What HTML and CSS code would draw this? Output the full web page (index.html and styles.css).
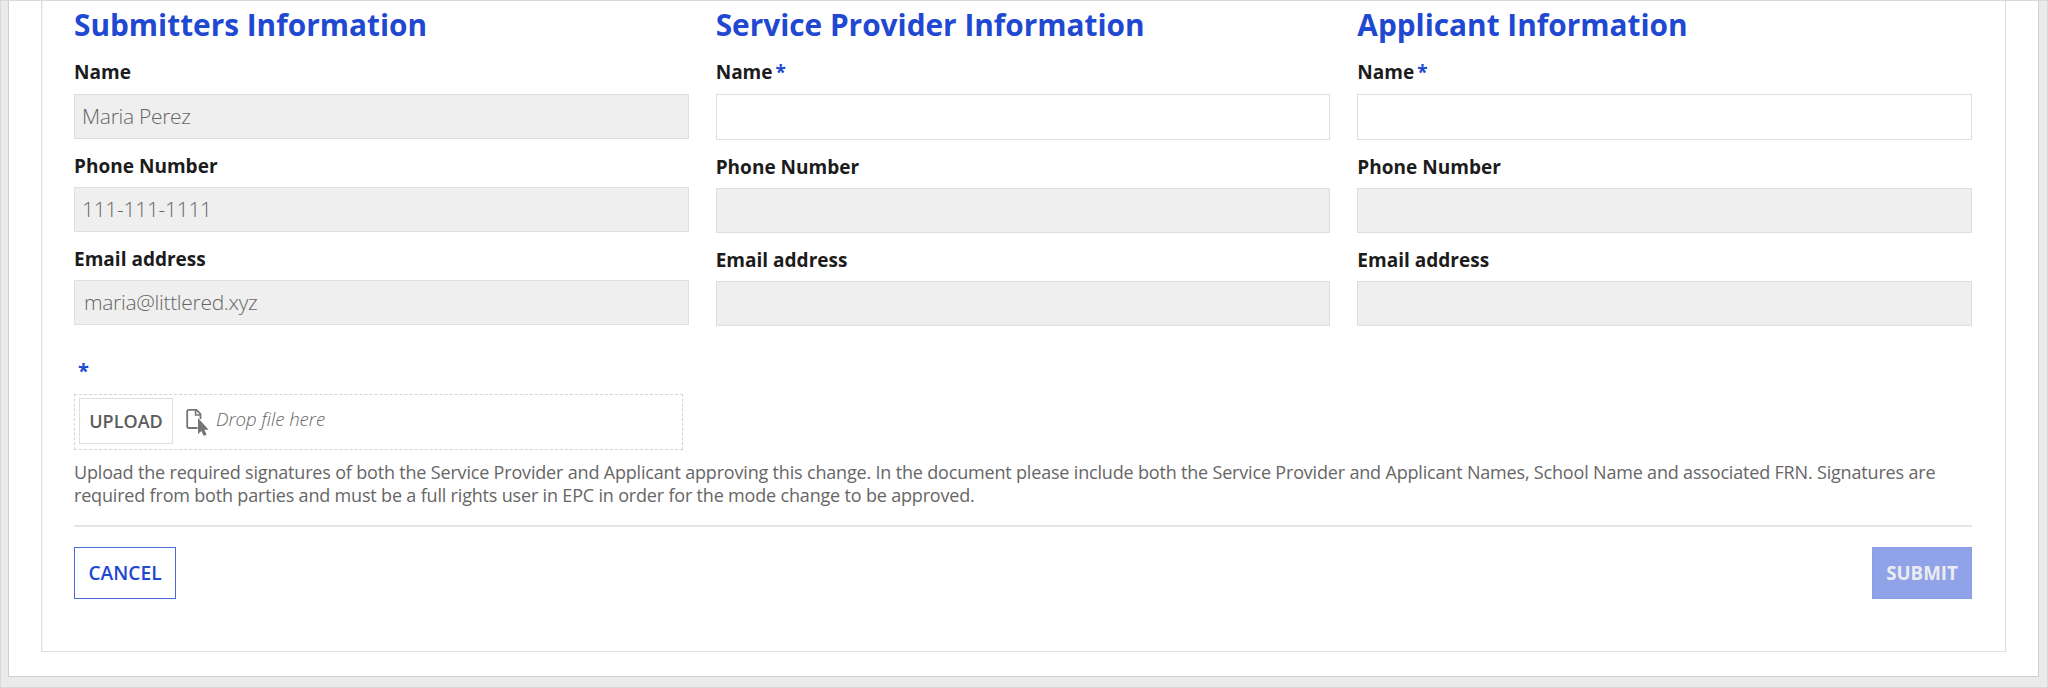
FILE: index.html
```html
<!DOCTYPE html>
<html lang="en">
<head>
<meta charset="utf-8">
<title>Mode Change</title>
<link rel="stylesheet" href="styles.css">
</head>
<body>
<main class="panel">
<form class="card">
<div class="columns">
<section class="column">
<h2 class="heading">Submitters Information</h2>
<div class="field"><label class="label">Name</label><div class="input disabled">Maria Perez</div></div>
<div class="field"><label class="label">Phone Number</label><div class="input disabled">111-111-1111</div></div>
<div class="field"><label class="label">Email address</label><div class="input disabled email">maria@littlered.xyz</div></div>
</section>
<section class="column tall">
<h2 class="heading">Service Provider Information</h2>
<div class="field"><label class="label">Name<span class="required">*</span></label><div class="input"></div></div>
<div class="field"><label class="label">Phone Number</label><div class="input disabled"></div></div>
<div class="field"><label class="label">Email address</label><div class="input disabled"></div></div>
</section>
<section class="column tall">
<h2 class="heading">Applicant Information</h2>
<div class="field"><label class="label">Name<span class="required">*</span></label><div class="input"></div></div>
<div class="field"><label class="label">Phone Number</label><div class="input disabled"></div></div>
<div class="field"><label class="label">Email address</label><div class="input disabled"></div></div>
</section>
</div>
<div class="upload-label">*</div>
<div class="dropzone">
<button type="button" class="upload">UPLOAD</button>
<svg class="drop-icon" width="24" height="28" viewBox="0 0 24 28">
<path d="M11.5 20H3Q1.2 20 1.2 18.2V3.7Q1.2 1.9 3 1.9H10.5L14.5 6.2V11" fill="none" stroke="#757575" stroke-width="1.8"/>
<path d="M9.6 1.9V7H14.5" fill="none" stroke="#757575" stroke-width="1.6"/>
<path d="M12 10V26L15.3 23L17.8 28L20.6 26.6L18.3 21.8H22.6Z" fill="#757575"/>
</svg>
<span class="drop-text">Drop file here</span>
</div>
<p class="help">Upload the required signatures of both the Service Provider and Applicant approving this change. In the document please include both the Service Provider and Applicant Names, School Name and associated FRN. Signatures are required from both parties and must be a full rights user in EPC in order for the mode change to be approved.</p>
<div class="actions">
<button type="button" class="button cancel">CANCEL</button>
<button type="button" class="button submit" disabled>SUBMIT</button>
</div>
</form>
</main>
</body>
</html>
```
FILE: styles.css
```css
* { box-sizing: border-box; }
body {
  margin: 0;
  height: 688px;
  padding: 0 8px 11px 7px;
  background: #ebebeb;
  border: 1px solid #d9d9d9;
  font-family: "Open Sans", sans-serif;
  overflow: hidden;
}
.panel {
  height: 676px;
  padding: 0 32px 24px;
  background: #fff;
  border: 1px solid #cfcfcf;
  border-top: 0;
}
.card {
  height: 651px;
  padding: 0 33px 0 32px;
  border: solid #dedede;
  border-width: 0 1px 1px;
  box-shadow: inset 1px 0 #f2f2f2;
}
.columns {
  display: grid;
  grid-template-columns: repeat(3, 1fr);
  gap: 27px;
}
.heading {
  margin: 0;
  padding-top: 4px;
  height: 57px;
  font-size: 29.8px;
  line-height: 40px;
  font-weight: 700;
  color: #2048d0;
}
.field { height: 93px; }
.label {
  display: block;
  height: 36px;
  line-height: 28px;
  font-size: 19.05px;
  font-weight: 700;
  color: #1c1c1c;
}
.field + .field .label { line-height: 30px; }
.required { margin-left: 3px; color: #2048d0; }
.input {
  height: 45px;
  padding-left: 7px;
  background: #fff;
  border: 1px solid #dedede;
  font-size: 21px;
  letter-spacing: -0.3px;
  font-weight: 300;
  line-height: 42px;
  color: #666;
}
.input.email { padding-left: 9px; }
.disabled { background: #efefef; }
.tall .field:nth-of-type(1) { height: 94px; }
.tall .field:nth-of-type(1) .input { height: 46px; }
.upload-label {
  height: 56px;
  padding: 19px 0 0 4px;
  font-size: 20px;
  font-weight: 700;
  color: #2048d0;
}
.dropzone {
  display: flex;
  align-items: flex-start;
  width: 609px;
  height: 56px;
  padding: 3px 4px;
  border: 1px dashed #d4d4d4;
}
.upload {
  width: 94px;
  height: 46px;
  padding: 0;
  background: #fff;
  border: 1px solid #dedede;
  font: 600 18px "Open Sans", sans-serif;
  color: #5c5c5c;
}
.drop-icon { margin: 10px 6px 0 13px; }
.drop-text { font-size: 18.6px; line-height: 42px; font-style: italic; font-weight: 300; color: #666; }
.help {
  margin: 11px 0 0;
  height: 64px;
  font-size: 18px;
  letter-spacing: -0.18px;
  line-height: 23.3px;
  color: #666;
}
.actions {
  display: flex;
  justify-content: space-between;
  padding-top: 20px;
  border-top: 2px solid #e6e6e6;
}
.button {
  height: 52px;
  padding: 0 0 2px;
  font: 600 19.2px "Open Sans", sans-serif;
}
.cancel { width: 102px; background: #fff; border: 1px solid #4a6bda; color: #2048d0; }
.submit { width: 100px; background: #90a3e8; border: 1px solid #8a9ee8; color: #ececf0; font-size: 18.7px; font-weight: 700; }
```
